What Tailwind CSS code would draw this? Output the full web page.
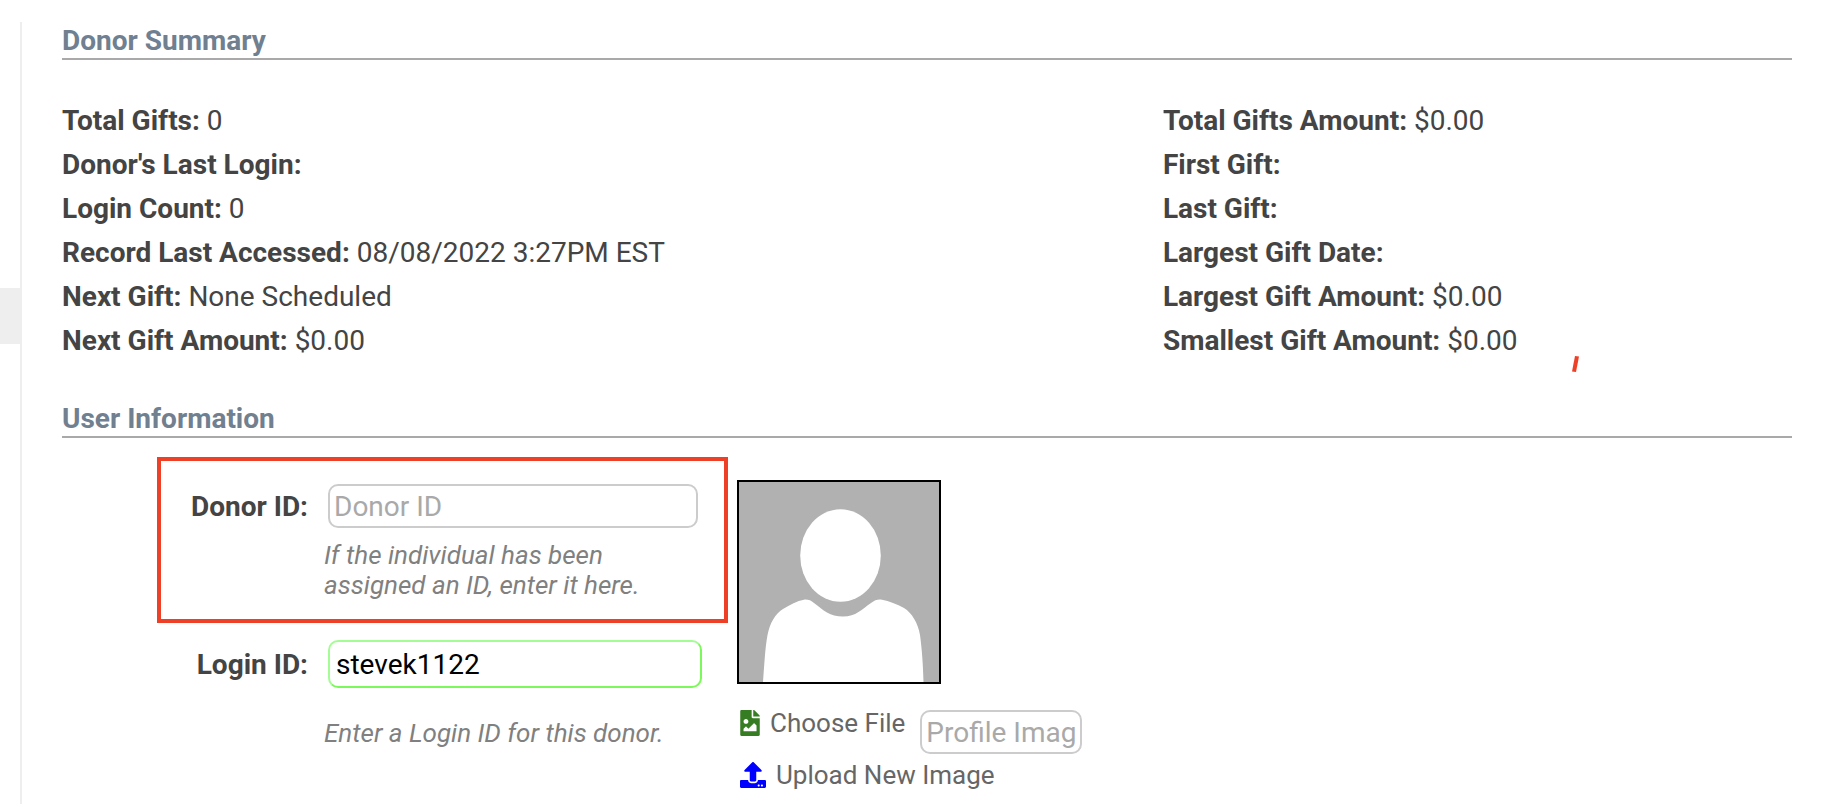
<!DOCTYPE html>
<html lang="en">
<head>
    <meta charset="UTF-8">
    <meta name="viewport" content="width=device-width, initial-scale=1.0">
    <title>Donor Record</title>
    <script src="https://cdn.jsdelivr.net/npm/@tailwindcss/browser@4"></script>
</head>
<body class="relative flex min-h-screen bg-white pt-[22px] font-['Roboto',sans-serif] text-[28px] text-[#444]">
    <!-- Side menu edge -->
    <aside class="w-5 shrink-0 pt-[266px]">
        <div class="h-14 bg-[#eee]"></div>
    </aside>

    <main class="flex-1 border-l-2 border-[#eee] pl-10 pr-[52px]">
        <!-- Donor Summary -->
        <section>
            <h2 class="border-b-2 border-[#a9a9a9] pt-0.5 font-bold leading-[34px] text-[#708090]">Donor Summary</h2>
            <div class="mt-[39px] grid grid-cols-[7fr_4fr] leading-[44px]">
                <ul>
                    <li><b>Total Gifts:</b> 0</li>
                    <li><b>Donor's Last Login:</b></li>
                    <li><b>Login Count:</b> 0</li>
                    <li><b>Record Last Accessed:</b> 08/08/2022 3:27PM EST</li>
                    <li><b>Next Gift:</b> None Scheduled</li>
                    <li><b>Next Gift Amount:</b> $0.00</li>
                </ul>
                <ul>
                    <li><b>Total Gifts Amount:</b> $0.00</li>
                    <li><b>First Gift:</b></li>
                    <li><b>Last Gift:</b></li>
                    <li><b>Largest Gift Date:</b></li>
                    <li><b>Largest Gift Amount:</b> $0.00</li>
                    <li><b>Smallest Gift Amount:</b> $0.00</li>
                </ul>
            </div>
        </section>

        <!-- User Information -->
        <section class="mt-[37px]">
            <h2 class="border-b-2 border-[#a9a9a9] pt-0.5 font-bold leading-[34px] text-[#708090]">User Information</h2>
            <form class="mt-[19px] flex gap-2 pl-[95px]">
                <div class="w-[571px]">
                    <div class="flex gap-5 border-4 border-[#ee4026] pb-[19px] pt-[23px]">
                        <label for="donorId" class="w-[147px] text-right font-bold leading-[46px]">Donor ID:</label>
                        <div>
                            <input type="text" id="donorId" placeholder="Donor ID"
                                class="block h-11 w-[370px] rounded-[10px] border-2 border-[#ccc] px-1 placeholder:text-[#a9a9a9]">
                            <p class="-ml-1 mt-3 w-[350px] text-[26px] italic leading-[30px] text-[#808080]">If the individual has been assigned an ID, enter it here.</p>
                        </div>
                    </div>
                    <div class="mt-[13px] flex gap-5 border-4 border-transparent">
                        <label for="loginId" class="w-[147px] text-right font-bold leading-[50px]">Login ID:</label>
                        <div>
                            <input type="text" id="loginId" value="stevek1122"
                                class="block h-12 w-[374px] rounded-[10px] border-2 border-b-[#7cf95a] border-l-[#a4fd94] border-r-[#7cf95a] border-t-[#a4fd94] px-1.5 text-black">
                            <p class="-ml-1 mt-[30px] text-[26px] italic leading-[30px] text-[#808080]">Enter a Login ID for this donor.</p>
                        </div>
                    </div>
                </div>

                <!-- Profile image -->
                <div class="pt-[23px] text-[26px] leading-[30px] text-[#666]">
                    <svg class="ml-px size-[204px] border-2 border-black bg-[#b1b1b1]" viewBox="0 0 200 200" fill="#fff" role="img" aria-label="Profile image">
                        <ellipse cx="101.500" cy="73.500" rx="40.300" ry="46.300"/>
                        <path d="M24 200 C25.500 181 26 167 28.500 153 C31 141 36 132 44 127 C51 122.500 58 119 65 117.700 C69 117.300 72 118.500 75 121 C84 128 91 134.600 104 134.600 C117 134.600 123 127 132 121 C136 118 139 117 143 117.700 C150 119 158 122 165 126 C173 131 179 141 181 153 C183 168 184 182 184.500 200 Z"/>
                    </svg>
                    <div class="mt-6 flex items-start gap-[15px] pl-1">
                        <a href="#" class="flex items-center gap-2.5">
                            <svg class="h-[26px] w-5" viewBox="0 0 384 512" fill="#357c22">
                                <path d="M384 121.941V128H256V0h6.059c6.365 0 12.470 2.529 16.971 7.029l97.941 97.941A24.005 24.005 0 0 1 384 121.941zM248 160c-13.200 0-24-10.800-24-24V0H24C10.745 0 0 10.745 0 24v464c0 13.255 10.745 24 24 24h336c13.255 0 24-10.745 24-24V160H248zm-135.455 16c26.510 0 48 21.490 48 48s-21.490 48-48 48-48-21.490-48-48 21.491-48 48-48zm208 240h-256l.485-48.485L104.545 328c4.686-4.686 11.799-4.201 16.485.485L160.545 368 264.060 264.485c4.686-4.686 12.284-4.686 16.971 0L320.545 304v112z"/>
                            </svg>
                            Choose File
                        </a>
                        <input type="text" placeholder="Profile Image" aria-label="Profile Image"
                            class="mt-0.5 h-11 w-[162px] rounded-[10px] border-2 border-[#ccc] px-1 text-[28px] placeholder:text-[#a9a9a9]">
                    </div>
                    <a href="#" class="mt-1.5 flex w-max items-center gap-2.5 pl-1">
                        <svg class="size-[26px]" viewBox="0 0 512 512" fill="#00f">
                            <path d="M296 384h-80c-13.300 0-24-10.700-24-24V192h-87.700c-17.800 0-26.700-21.500-14.100-34.100L242.300 5.700c7.500-7.500 19.800-7.500 27.300 0l152.200 152.200c12.600 12.600 3.700 34.100-14.100 34.100H320v168c0 13.300-10.700 24-24 24zm216-8v112c0 13.300-10.700 24-24 24H24c-13.300 0-24-10.700-24-24V376c0-13.300 10.700-24 24-24h136v8c0 30.900 25.100 56 56 56h80c30.900 0 56-25.100 56-56v-8h136c13.300 0 24 10.700 24 24zm-124 88c0-11-9-20-20-20s-20 9-20 20 9 20 20 20 20-9 20-20zm64 0c0-11-9-20-20-20s-20 9-20 20 9 20 20 20 20-9 20-20z"/>
                        </svg>
                        Upload New Image
                    </a>
                </div>
            </form>
        </section>
    </main>

    <!-- Pen mark -->
    <svg class="absolute left-[1572px] top-[356px] h-4 w-[7px]" viewBox="0 0 7 16" fill="#ee4026">
        <path d="M3 0 L7 0.500 L4 16 L0 15.500 Z"/>
    </svg>
</body>
</html>
